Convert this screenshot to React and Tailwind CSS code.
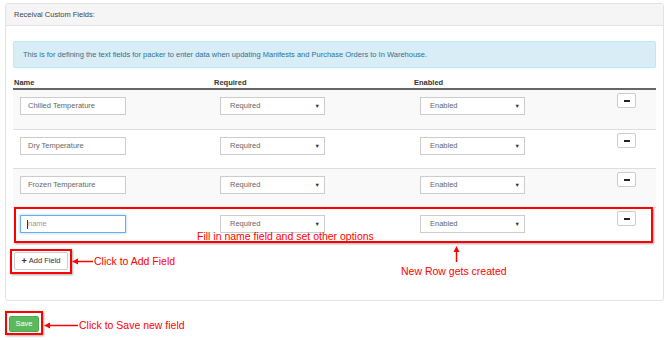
import React from "react";

const font = { fontFamily: "'Liberation Sans', Arial, sans-serif" };

function Select({ label }) {
  return (
    <div className="relative w-[105px] h-[18px] border border-[#ccc] bg-white flex items-center pl-[9px] text-[7.5px] text-[#666]">
      <span>{label}</span>
      <span className="absolute right-[4px] top-[4px] text-[5.5px] text-[#333]">▼</span>
    </div>
  );
}

function MinusBtn() {
  return (
    <div className="w-[19px] h-[15px] border border-[#ccc] rounded-[2px] bg-white flex items-center justify-center">
      <div className="w-[6px] h-[2px] bg-[#222]" />
    </div>
  );
}

function Row({ name, placeholder, striped, first, focus }) {
  return (
    <div
      className={
        "flex h-[39px] box-border " +
        (first ? "" : "border-t border-[#ddd] ") +
        (striped ? "bg-[#f9f9f9]" : "bg-white")
      }
    >
      <div className="w-[200px] pl-[7px] pt-[7px]">
        {focus ? (
          <div className="w-[106px] h-[18px] border border-[#66afe9] shadow-[0_0_3px_rgba(102,175,233,0.6)] bg-white flex items-center pl-[6px] text-[7.5px] text-[#999]">
            <span className="w-[1px] h-[9px] bg-[#333]" />
            <span>{placeholder}</span>
          </div>
        ) : (
          <div className="w-[106px] h-[18px] border border-[#ccc] bg-white flex items-center pl-[7px] text-[7.5px] text-[#666]">
            {name}
          </div>
        )}
      </div>
      <div className="w-[200px] pl-[7px] pt-[7px]">
        <Select label="Required" />
      </div>
      <div className="w-[200px] pl-[7px] pt-[7px]">
        <Select label="Enabled" />
      </div>
      <div className="flex-1 pl-[4px] pt-[3px]">
        <MinusBtn />
      </div>
    </div>
  );
}

export default function App() {
  return (
    <div className="relative w-[670px] h-[340px] bg-white overflow-hidden" style={font}>
      <div className="pt-[3px] pl-[5px]">
        <div className="w-[659px] border border-[#e3e3e3] rounded-[3px] bg-white">
          <div className="h-[22px] bg-[#f5f5f5] border-b border-[#e3e3e3] flex items-center pl-[8px] text-[7.5px] text-[#444]">
            Receival Custom Fields:
          </div>
          <div className="pt-[15px] px-[7px] pb-[30px]">
            <div className="h-[27px] bg-[#d9edf7] border border-[#bce8f1] rounded-[2px] flex items-center pl-[9px] text-[7.5px] text-[#31708f]">
              This is for defining the text fields for packer to enter data when updating Manifests and Purchase Orders to In Warehouse.
            </div>
            <div className="mt-[9px] h-[13px] border-b-2 border-[#666] flex items-start text-[7.5px] font-bold text-[#333]">
              <div className="w-[200px] pl-[1px]">Name</div>
              <div className="w-[200px] pl-[1px]">Required</div>
              <div className="w-[200px] pl-[1px]">Enabled</div>
            </div>
            <Row name="Chilled Temperature" striped first />
            <Row name="Dry Temperature" />
            <Row name="Frozen Temperature" striped />
            <Row placeholder="name" focus />
            <div className="mt-[6px] ml-[1px] w-[54px] h-[18px] border border-[#ccc] rounded-[2px] bg-white flex items-center justify-center gap-[2px] text-[7.5px] text-[#333]">
              <span className="font-bold text-[9px] leading-none">+</span>
              <span>Add Field</span>
            </div>
          </div>
        </div>
        <div className="mt-[15px] ml-[4px] w-[30px] h-[16px] bg-[#5cb85c] border border-[#4cae4c] rounded-[2px] flex items-center justify-center text-[7.5px] text-white">
          Save
        </div>
      </div>

      {/* annotation overlays */}
      <div className="absolute left-[14px] top-[207px] w-[639px] h-[36px] border-2 border-[#ff0000] shadow-[1px_1px_2px_rgba(0,0,0,0.35)]" />
      <div className="absolute left-[10px] top-[249px] w-[62px] h-[25px] border-2 border-[#ff0000] shadow-[1px_1px_2px_rgba(0,0,0,0.35)]" />
      <div className="absolute left-[5px] top-[311px] w-[38px] h-[24px] border-2 border-[#ff0000] shadow-[1px_1px_2px_rgba(0,0,0,0.35)]" />

      <svg className="absolute inset-0 pointer-events-none" width="670" height="340">
        <g stroke="#ff0000" strokeWidth="1.5" fill="#ff0000">
          <line x1="76" y1="261.5" x2="93" y2="261.5" />
          <polygon points="72,261.5 78,258.5 78,264.5" stroke="none" />
          <line x1="48" y1="325.5" x2="78" y2="325.5" />
          <polygon points="44,325.5 50,322.5 50,328.5" stroke="none" />
          <line x1="456.5" y1="250" x2="456.5" y2="262" />
          <polygon points="456.5,246 453.5,252 459.5,252" stroke="none" />
        </g>
      </svg>

      <div className="absolute left-[197px] top-[229px] text-[10.5px] leading-[14px] text-[#ff0000] whitespace-nowrap">
        Fill in name field and set other options
      </div>
      <div className="absolute left-[94px] top-[254px] text-[10.5px] leading-[14px] text-[#ff0000] whitespace-nowrap">
        Click to Add Field
      </div>
      <div className="absolute left-[401px] top-[264px] text-[10.5px] leading-[14px] text-[#ff0000] whitespace-nowrap">
        New Row gets created
      </div>
      <div className="absolute left-[79px] top-[318px] text-[10.5px] leading-[14px] text-[#ff0000] whitespace-nowrap">
        Click to Save new field
      </div>
    </div>
  );
}
